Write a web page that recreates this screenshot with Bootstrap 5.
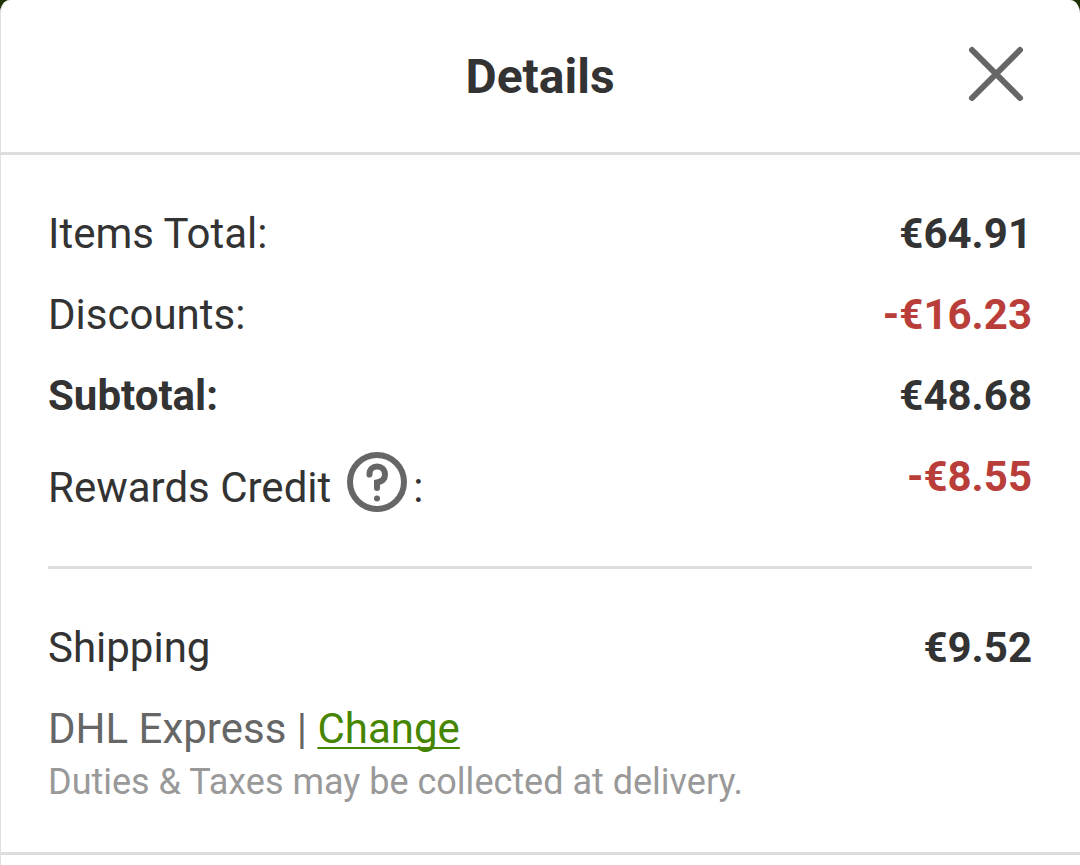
<!DOCTYPE html>
<html lang="en">
<head>
<meta charset="utf-8">
<meta name="viewport" content="width=device-width, initial-scale=1">
<title>Details</title>
<link href="https://cdn.jsdelivr.net/npm/bootstrap@5.3.0/dist/css/bootstrap.min.css" rel="stylesheet">
<style>
  body { background: #1d3306; color: #333; font-family: Roboto, sans-serif; font-size: 42px; line-height: 49px; }
  .sheet { border-radius: 10px 10px 0 0 / 14px 14px 0 0; box-shadow: inset 1px 0 #e0e0e0; }
  .sheet-head { height: 155px; padding-top: 2px; border-bottom: 3px solid #ddd; }
  .sheet-title { font-size: 48px; line-height: 56px; font-weight: 700; }
  .close-btn { top: 46px; right: 56px; line-height: 0; color: #666; }
  .summary { padding: 54px 48px 41px; }
  .line { padding-bottom: 32px; }
  .discount { color: #b93e39; }
  .help-btn { color: #666; line-height: 0; margin: 0 6px 0 16px; }
  .rule { border-top: 3px solid #ddd; margin: 54px 0; }
  .method { color: #666; }
  .method a { color: #458500; text-decoration-thickness: 2px; text-underline-offset: 4px; text-decoration-skip-ink: none; }
  .note { color: #999; font-size: 36px; line-height: 58px; }
  .next { border-top: 3px solid #ddd; }
</style>
</head>
<body>
<main class="sheet bg-white min-vh-100 overflow-hidden">
  <header class="sheet-head position-relative d-flex align-items-center justify-content-center">
    <h1 class="sheet-title m-0">Details</h1>
    <button type="button" class="close-btn btn p-0 border-0 position-absolute" aria-label="Close">
      <svg width="56" height="56" viewBox="0 0 56 56" fill="none" stroke="currentColor" stroke-width="6" stroke-linecap="round"><path d="M4 4 52 52M52 4 4 52"/></svg>
    </button>
  </header>
  <section class="summary">
    <div class="line d-flex justify-content-between"><span>Items Total:</span><strong>€64.91</strong></div>
    <div class="line d-flex justify-content-between"><span>Discounts:</span><strong class="discount">-€16.23</strong></div>
    <div class="line d-flex justify-content-between"><strong>Subtotal:</strong><strong>€48.68</strong></div>
    <div class="d-flex justify-content-between">
      <div class="d-flex align-items-end">
        <span>Rewards Credit</span>
        <button type="button" class="help-btn btn p-0 border-0" aria-label="About rewards credit">
          <svg width="60" height="60" viewBox="0 0 60 60" fill="none" stroke="currentColor" stroke-width="6" stroke-linecap="round"><circle cx="30" cy="30" r="27"/><path d="M22.5 22.5C22 11.5 38 12 38 22.500C38 26.500 35.500 29.500 30 30.500V36"/><circle cx="30" cy="46.500" r="3" fill="currentColor" stroke="none"/></svg>
        </button>
        <span>:</span>
      </div>
      <strong class="discount">-€8.55</strong>
    </div>
    <div class="rule"></div>
    <div class="line d-flex justify-content-between"><span>Shipping</span><strong>€9.52</strong></div>
    <div class="method">DHL Express | <a href="#">Change</a></div>
    <div class="note">Duties &amp; Taxes may be collected at delivery.</div>
  </section>
  <div class="next"></div>
</main>
<script src="https://cdn.jsdelivr.net/npm/bootstrap@5.3.0/dist/js/bootstrap.bundle.min.js"></script>
</body>
</html>
